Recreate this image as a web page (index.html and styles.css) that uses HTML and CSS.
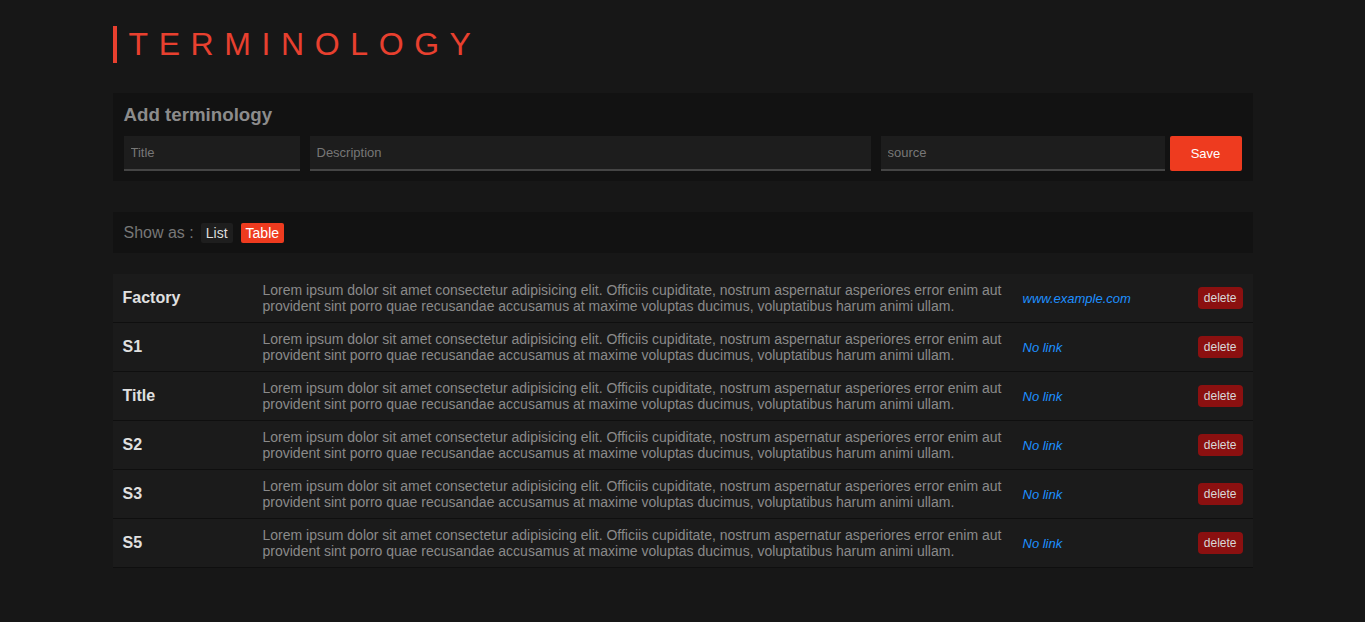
FILE: index.html
```html
<!DOCTYPE html>
<html lang="en">
<head>
<meta charset="utf-8">
<title>Terminology</title>
<link rel="stylesheet" href="styles.css">
</head>
<body>
<div class="container">
  <h1 class="page-title">TERMINOLOGY</h1>

  <section class="panel add-panel">
    <h2 class="panel-heading">Add terminology</h2>
    <form class="add-form">
      <input class="field field-title" type="text" placeholder="Title">
      <input class="field field-desc" type="text" placeholder="Description">
      <input class="field field-source" type="text" placeholder="source">
      <button class="btn-save" type="button">Save</button>
    </form>
  </section>

  <section class="panel show-panel">
    <span class="show-label">Show as :</span>
    <button class="toggle" type="button">List</button>
    <button class="toggle active" type="button">Table</button>
  </section>

  <table class="terms">
    <colgroup>
      <col class="c-name"><col class="c-desc"><col class="c-link"><col class="c-act">
    </colgroup>
    <tbody>
      <tr>
        <td class="name">Factory</td>
        <td class="desc">Lorem ipsum dolor sit amet consectetur adipisicing elit. Officiis cupiditate, nostrum aspernatur asperiores error enim aut provident sint porro quae recusandae accusamus at maxime voluptas ducimus, voluptatibus harum animi ullam.</td>
        <td class="link"><a href="#">www.example.com</a></td>
        <td class="act"><button class="btn-delete" type="button">delete</button></td>
      </tr>
      <tr>
        <td class="name">S1</td>
        <td class="desc">Lorem ipsum dolor sit amet consectetur adipisicing elit. Officiis cupiditate, nostrum aspernatur asperiores error enim aut provident sint porro quae recusandae accusamus at maxime voluptas ducimus, voluptatibus harum animi ullam.</td>
        <td class="link"><a href="#">No link</a></td>
        <td class="act"><button class="btn-delete" type="button">delete</button></td>
      </tr>
      <tr>
        <td class="name">Title</td>
        <td class="desc">Lorem ipsum dolor sit amet consectetur adipisicing elit. Officiis cupiditate, nostrum aspernatur asperiores error enim aut provident sint porro quae recusandae accusamus at maxime voluptas ducimus, voluptatibus harum animi ullam.</td>
        <td class="link"><a href="#">No link</a></td>
        <td class="act"><button class="btn-delete" type="button">delete</button></td>
      </tr>
      <tr>
        <td class="name">S2</td>
        <td class="desc">Lorem ipsum dolor sit amet consectetur adipisicing elit. Officiis cupiditate, nostrum aspernatur asperiores error enim aut provident sint porro quae recusandae accusamus at maxime voluptas ducimus, voluptatibus harum animi ullam.</td>
        <td class="link"><a href="#">No link</a></td>
        <td class="act"><button class="btn-delete" type="button">delete</button></td>
      </tr>
      <tr>
        <td class="name">S3</td>
        <td class="desc">Lorem ipsum dolor sit amet consectetur adipisicing elit. Officiis cupiditate, nostrum aspernatur asperiores error enim aut provident sint porro quae recusandae accusamus at maxime voluptas ducimus, voluptatibus harum animi ullam.</td>
        <td class="link"><a href="#">No link</a></td>
        <td class="act"><button class="btn-delete" type="button">delete</button></td>
      </tr>
      <tr>
        <td class="name">S5</td>
        <td class="desc">Lorem ipsum dolor sit amet consectetur adipisicing elit. Officiis cupiditate, nostrum aspernatur asperiores error enim aut provident sint porro quae recusandae accusamus at maxime voluptas ducimus, voluptatibus harum animi ullam.</td>
        <td class="link"><a href="#">No link</a></td>
        <td class="act"><button class="btn-delete" type="button">delete</button></td>
      </tr>
    </tbody>
  </table>
</div>
</body>
</html>
```

FILE: styles.css
```css
* { box-sizing: border-box; }

html, body {
  margin: 0;
  padding: 0;
  background: #171717;
  font-family: "Liberation Sans", Arial, sans-serif;
  color: #ccc;
}

.container {
  width: 1140px;
  margin: 0 auto;
  padding-top: 26px;
}

.page-title {
  margin: 0;
  height: 37px;
  border-left: 4px solid #e8402f;
  padding-left: 12px;
  font-size: 32px;
  font-weight: normal;
  line-height: 37px;
  letter-spacing: 10.6px;
  color: #e8402f;
}

.panel {
  background: #121212;
}

.add-panel {
  margin-top: 30px;
  padding: 10px 11px 10px 11px;
}

.panel-heading {
  margin: 0 0 10px 0;
  font-size: 18.72px;
  line-height: 23px;
  font-weight: bold;
  color: #8c8c8c;
}

.add-form {
  display: flex;
  align-items: flex-start;
  margin: 0;
}

.field {
  height: 35px;
  background: #1d1d1d;
  border: none;
  border-bottom: 2px solid #454545;
  padding: 0 7px;
  font-family: "Liberation Sans", Arial, sans-serif;
  font-size: 13px;
  color: #ccc;
  outline: none;
}
.field::placeholder { color: #777; }

.field-title { width: 176px; margin-right: 10px; }
.field-desc { flex: 1; min-width: 0; margin-right: 10px; }
.field-source { width: 284px; margin-right: 5px; }

.btn-save {
  width: 72px;
  height: 35px;
  background: #ee3b1f;
  color: #fff;
  border: none;
  border-radius: 2px;
  font-family: "Liberation Sans", Arial, sans-serif;
  font-size: 13px;
}

.show-panel {
  margin-top: 31px;
  height: 41px;
  display: flex;
  align-items: center;
  padding: 0 11px;
}

.show-label {
  font-size: 16px;
  color: #777;
  margin-right: 7px;
}

.toggle {
  height: 20px;
  padding: 0 5px;
  margin-right: 8px;
  border: none;
  border-radius: 2px;
  background: #1e1e1e;
  color: #ddd;
  font-family: "Liberation Sans", Arial, sans-serif;
  font-size: 14px;
  line-height: 20px;
}
.toggle.active {
  background: #ee3b1f;
  color: #fff;
}

.terms {
  margin-top: 21px;
  width: 100%;
  border-collapse: collapse;
  table-layout: fixed;
}

.c-name { width: 140px; }
.c-desc { width: 760px; }
.c-link { width: 160px; }
.c-act { width: 80px; }

.terms tr {
  background: #1b1b1b;
  border-bottom: 1px solid #0f0f0f;
}

.terms td {
  height: 48px;
  padding: 8px 10px;
  vertical-align: middle;
}

.name {
  font-size: 16px;
  font-weight: bold;
  color: #e0e0e0;
}

.desc {
  font-size: 14px;
  line-height: 16px;
  color: #8a8a8a;
}

.link a {
  font-size: 13px;
  font-style: italic;
  color: #1e90ff;
  text-decoration: none;
}

.act { text-align: right; }

.btn-delete {
  height: 22px;
  padding: 0 6px;
  background: #8b1010;
  color: #d8d8d8;
  border: none;
  border-radius: 4px;
  font-family: "Liberation Sans", Arial, sans-serif;
  font-size: 12px;
}
```
